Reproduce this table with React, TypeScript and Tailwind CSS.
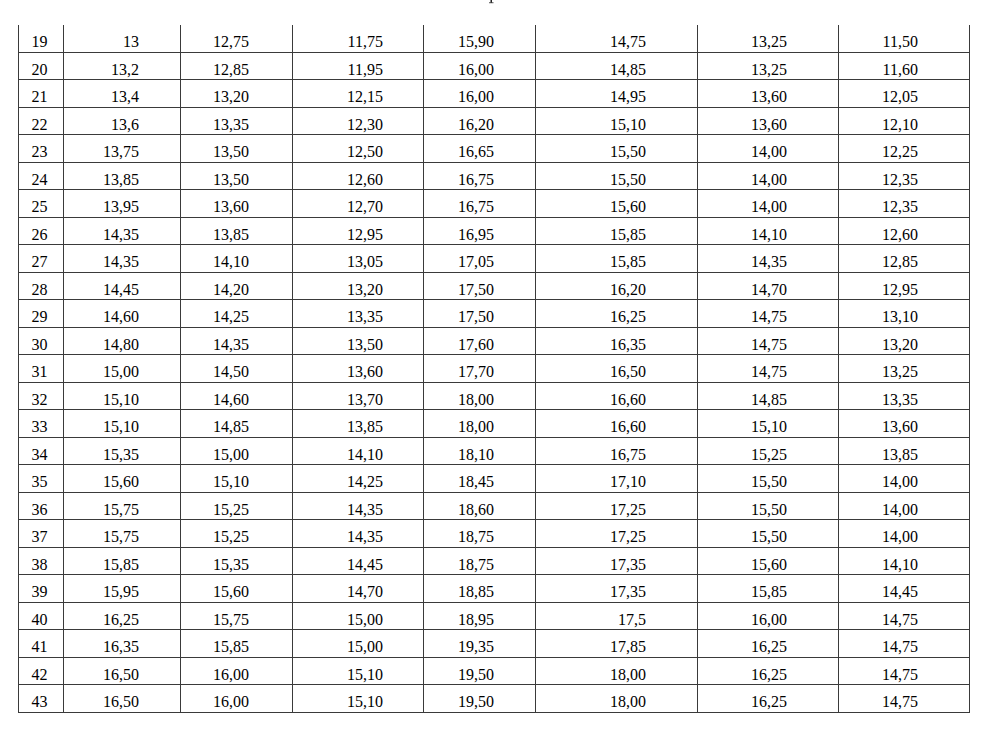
const rows: string[][] = [
  ['19', '13', '12,75', '11,75', '15,90', '14,75', '13,25', '11,50'],
  ['20', '13,2', '12,85', '11,95', '16,00', '14,85', '13,25', '11,60'],
  ['21', '13,4', '13,20', '12,15', '16,00', '14,95', '13,60', '12,05'],
  ['22', '13,6', '13,35', '12,30', '16,20', '15,10', '13,60', '12,10'],
  ['23', '13,75', '13,50', '12,50', '16,65', '15,50', '14,00', '12,25'],
  ['24', '13,85', '13,50', '12,60', '16,75', '15,50', '14,00', '12,35'],
  ['25', '13,95', '13,60', '12,70', '16,75', '15,60', '14,00', '12,35'],
  ['26', '14,35', '13,85', '12,95', '16,95', '15,85', '14,10', '12,60'],
  ['27', '14,35', '14,10', '13,05', '17,05', '15,85', '14,35', '12,85'],
  ['28', '14,45', '14,20', '13,20', '17,50', '16,20', '14,70', '12,95'],
  ['29', '14,60', '14,25', '13,35', '17,50', '16,25', '14,75', '13,10'],
  ['30', '14,80', '14,35', '13,50', '17,60', '16,35', '14,75', '13,20'],
  ['31', '15,00', '14,50', '13,60', '17,70', '16,50', '14,75', '13,25'],
  ['32', '15,10', '14,60', '13,70', '18,00', '16,60', '14,85', '13,35'],
  ['33', '15,10', '14,85', '13,85', '18,00', '16,60', '15,10', '13,60'],
  ['34', '15,35', '15,00', '14,10', '18,10', '16,75', '15,25', '13,85'],
  ['35', '15,60', '15,10', '14,25', '18,45', '17,10', '15,50', '14,00'],
  ['36', '15,75', '15,25', '14,35', '18,60', '17,25', '15,50', '14,00'],
  ['37', '15,75', '15,25', '14,35', '18,75', '17,25', '15,50', '14,00'],
  ['38', '15,85', '15,35', '14,45', '18,75', '17,35', '15,60', '14,10'],
  ['39', '15,95', '15,60', '14,70', '18,85', '17,35', '15,85', '14,45'],
  ['40', '16,25', '15,75', '15,00', '18,95', '17,5', '16,00', '14,75'],
  ['41', '16,35', '15,85', '15,00', '19,35', '17,85', '16,25', '14,75'],
  ['42', '16,50', '16,00', '15,10', '19,50', '18,00', '16,25', '14,75'],
  ['43', '16,50', '16,00', '15,10', '19,50', '18,00', '16,25', '14,75'],
];

// per-column alignment, written out so Tailwind sees every class
const cellClass = [
  'text-center pr-[3px]',
  'text-right pr-[41px]',
  'text-right pr-[43px]',
  'text-right pr-[40px]',
  'text-right pr-[41px]',
  'text-right pr-[51px]',
  'text-right pr-[51px]',
  'text-right pr-[51px]',
];

export default function App() {
  return (
    <div className="w-[1000px] h-[730px] bg-white text-black overflow-hidden font-['Liberation_Serif','Times_New_Roman',serif]">
      {/* tail of a glyph from the line above the table */}
      <div className="h-[25px] pl-[489px]">
        <svg width="5" height="4" viewBox="0 0 5 4" className="block">
          <rect x="1.5" y="0" width="1.5" height="3" fill="#222" />
          <rect x="0" y="2.3" width="4.5" height="0.9" fill="#444" />
        </svg>
      </div>

      <div className="ml-[18px] w-[951px] border-l border-[#3a3a3a] grid grid-cols-[45px_117px_112px_131px_112px_162px_141px_131px] auto-rows-[27.5px] text-[16px]">
        {rows.map((row, r) =>
          row.map((value, c) => (
            <div
              key={`${r}-${c}`}
              className={`border-r border-b border-[#3a3a3a] pt-[8px] leading-[18.5px] ${cellClass[c]}`}
            >
              {value}
            </div>
          ))
        )}
      </div>
    </div>
  );
}
